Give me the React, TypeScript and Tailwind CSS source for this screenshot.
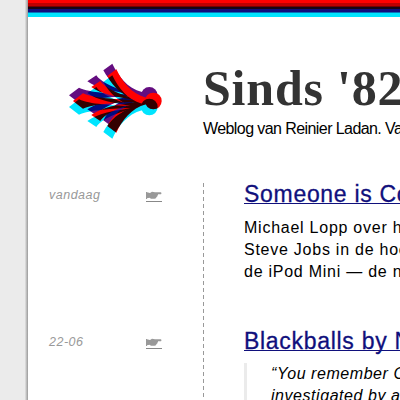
import React from 'react';

const sans = "font-['Liberation_Sans',Arial,sans-serif]";

function Bird() {
  return (
    <g>
      <path d="M130 46L157 26C174 62 202 100 246 111L246 131C202 142 174 180 157 216L130 196C148 160 182 134 220 121C182 108 148 82 130 46Z" />
      <path d="M82 79L109 61C122 80 158 101 234 120C158 111 112 100 82 79Z" />
      <path d="M82 163L109 181C122 162 158 141 234 122C158 131 112 142 82 163Z" />
      <path d="M27 121L57 98C92 113 145 116 240 119L240 123C145 126 92 129 57 144Z" />
      <circle cx="268" cy="121" r="25" />
    </g>
  );
}

function Logo() {
  return (
    <svg className="isolate block h-[90px] w-[110px] shrink-0" viewBox="0 0 330 270" aria-label="Sinds '82">
      <g fill="#640d80"><Bird /></g>
      <g fill="#ff0000" transform="translate(12 17)"><Bird /></g>
      <g fill="#00e5ff" transform="translate(0 35)" className="mix-blend-multiply"><Bird /></g>
      <g fill="#ff0000" opacity="0.2" transform="translate(12 17)"><Bird /></g>
    </svg>
  );
}

function Hand() {
  return (
    <a className="flex h-[11px] w-4 flex-col justify-between">
      <svg className="h-[9px] w-4" viewBox="0 0 16 9" fill="#999">
        <path d="M0 1H1V8H0Z M1 1.3L4 2 6 .8 9 1.2 15 1.3Q16 2.3 15 3.2H12Q12.3 4 11.5 4.5 11.6 5.6 10.5 6 10.5 7.5 8.5 7.7H5L3.5 6.8 1 7.3Z" />
      </svg>
      <span className="h-px w-4 bg-[#888]" />
    </a>
  );
}

function Meta({ date }: { date: string }) {
  return (
    <div className="flex w-[175px] shrink-0 pl-[21px]">
      <span className="w-[97px] text-[12.5px] leading-[16px] tracking-[0.5px] text-[#999] italic">{date}</span>
      <div className="pt-[4px]"><Hand /></div>
    </div>
  );
}

function Title({ children }: { children: string }) {
  return (
    <h2 className="h-[34px] text-[23px] leading-[22px] tracking-[0.7px] text-[#10107c] underline decoration-1 underline-offset-[1px] [-webkit-text-stroke:0.3px_#10107c] [text-decoration-skip-ink:none]">{children}</h2>
  );
}

export default function App() {
  return (
    <div className={`${sans} flex h-[400px] w-[400px] overflow-hidden bg-white text-black`}>
      <div className="flex w-7 shrink-0 bg-[#ebebeb]">
        <div className="ml-auto w-[3px] bg-linear-to-r from-[#e4e4e4] to-[#999]" />
      </div>
      <main className="w-[372px] shrink-0 overflow-hidden">
        <div className="h-[3px] bg-[#ff0000]" />
        <div className="h-[3px] bg-[#bd0000]" />
        <div className="h-px bg-[#740000]" />
        <div className="h-[2px] bg-[#160614]" />
        <div className="h-[3px] bg-[#10107c]" />
        <div className="h-px bg-[#0874b9]" />
        <div className="h-1 bg-[#00e5ff]" />
        <header className="flex h-[166px] pt-[38px] pl-8">
          <Logo />
          <div className="ml-[33px] w-[300px] shrink-0 whitespace-nowrap">
            <h1 className="h-[64px] font-['Liberation_Serif',serif] text-[50px] leading-[66px] font-bold tracking-[0.8px] text-[#333]">Sinds '82</h1>
            <p className="text-[16px] leading-[20px] tracking-[-0.58px]">Weblog van Reinier Ladan. Va</p>
          </div>
        </header>
        <div className="flex">
          <div className="w-[175px] shrink-0">
            <div className="flex h-[147px] pt-1"><Meta date="vandaag" /></div>
            <div className="flex pt-1"><Meta date="22-06" /></div>
          </div>
          <div className="h-[217px] w-px shrink-0 bg-[repeating-linear-gradient(to_bottom,#999_0_4px,transparent_4px_7px)]" />
          <div className="w-[400px] shrink-0 pl-10 whitespace-nowrap">
            <article className="h-[147px]">
              <Title>Someone is Co</Title>
              <p className="text-[16px] leading-[22px] tracking-[0.75px]">Michael Lopp over h<br />Steve Jobs in de hoe<br />de iPod Mini — de n</p>
            </article>
            <article>
              <Title>Blackballs by N</Title>
              <blockquote className="-mt-px border-l-[3px] border-[#ebebeb] pl-6 text-[16px] leading-[22px] tracking-[0.55px] italic">“You remember O<br />investigated by a</blockquote>
            </article>
          </div>
        </div>
      </main>
    </div>
  );
}
